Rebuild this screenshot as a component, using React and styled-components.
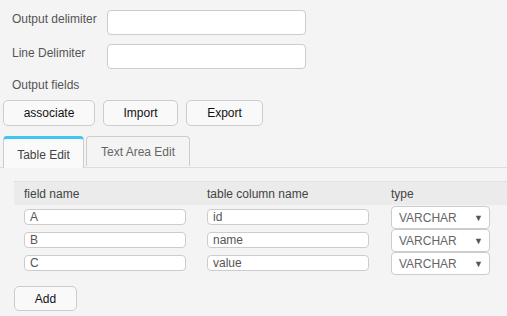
import React from "react";
import styled, { createGlobalStyle } from "styled-components";

const GlobalStyle = createGlobalStyle`
  html, body {
    margin: 0;
    padding: 0;
    background: #f4f4f4;
    font-family: "Liberation Sans", Arial, sans-serif;
    font-size: 12px;
    color: #555;
  }
`;

const Page = styled.div`
  width: 507px;
  height: 316px;
  overflow: hidden;
  padding-top: 10px;
  box-sizing: border-box;
`;

const FieldRow = styled.div`
  display: flex;
  align-items: flex-start;
  margin-bottom: 9px;
`;

const FieldLabel = styled.label`
  width: 95px;
  padding-left: 12px;
  padding-top: 2px;
  line-height: 14px;
  color: #555;
`;

const TextInput = styled.input`
  width: 199px;
  height: 25px;
  box-sizing: border-box;
  border: 1px solid #ccc;
  border-radius: 4px;
  background: #fff;
  outline: none;
`;

const SectionLabel = styled.div`
  padding-left: 12px;
  line-height: 14px;
  height: 22px;
`;

const ButtonBar = styled.div`
  display: flex;
  gap: 8px;
  padding-left: 3px;
`;

const Button = styled.button`
  width: ${(p) => p.width}px;
  height: ${(p) => p.height || 26}px;
  box-sizing: border-box;
  border: 1px solid #ccc;
  border-radius: 5px;
  background: #f9f9f9;
  font-family: inherit;
  font-size: 12px;
  color: #111;
  padding: 0;
`;

const Tabs = styled.div`
  display: flex;
  align-items: flex-start;
  gap: 2px;
  margin-top: 10px;
  padding-left: 3px;
  border-bottom: 1px solid #ddd;
  height: 31px;
`;

const Tab = styled.div`
  width: ${(p) => p.width}px;
  height: ${(p) => (p.active ? 32 : 30)}px;
  box-sizing: border-box;
  display: flex;
  align-items: center;
  justify-content: center;
  border: 1px solid #ccc;
  border-top: ${(p) => (p.active ? "3px solid #3fc4f4" : "1px solid #ccc")};
  border-bottom: none;
  border-radius: 4px 4px 0 0;
  background: ${(p) => (p.active ? "#fafafa" : "#f4f4f4")};
  color: ${(p) => (p.active ? "#444" : "#666")};
  padding-top: ${(p) => (p.active ? 2 : 0)}px;
  font-size: 12px;
`;

const Panel = styled.div`
  padding: 13px 0 0 14px;
`;

const Grid = styled.div`
  display: grid;
  grid-template-columns: 183px 184px 1fr;
`;

const HeadCell = styled.div`
  height: 24px;
  display: flex;
  align-items: center;
  padding-left: 10px;
  background: #ebebeb;
  border-top: 1px solid #e2e2e2;
  box-sizing: border-box;
  color: #444;
`;

const Cell = styled.div`
  height: 23px;
  display: flex;
  align-items: flex-start;
  padding-left: 10px;
  padding-top: 1px;
  box-sizing: border-box;
  &:nth-child(-n + 6) {
    margin-top: 3px;
  }
`;

const SmallInput = styled.input`
  width: ${(p) => p.width}px;
  height: 16px;
  box-sizing: border-box;
  border: 1px solid #ccc;
  border-radius: 4px;
  background: #fff;
  font-family: inherit;
  font-size: 12px;
  color: #555;
  padding: 0 5px;
  outline: none;
`;

const Select = styled.div`
  width: 99px;
  height: 23px;
  box-sizing: border-box;
  border: 1px solid #ccc;
  border-radius: 4px;
  background: #fff;
  display: flex;
  align-items: center;
  justify-content: space-between;
  padding: 0 6px 0 7px;
  color: #666;
  margin-top: -3px;
`;

const Caret = styled.span`
  font-size: 9px;
  color: #555;
`;

const AddRow = styled.div`
  margin-top: 9px;
`;

const rows = [
  ["A", "id"],
  ["B", "name"],
  ["C", "value"],
];

export default function App() {
  return (
    <Page>
      <GlobalStyle />
      <FieldRow>
        <FieldLabel>Output delimiter</FieldLabel>
        <TextInput />
      </FieldRow>
      <FieldRow>
        <FieldLabel>Line Delimiter</FieldLabel>
        <TextInput />
      </FieldRow>
      <SectionLabel>Output fields</SectionLabel>
      <ButtonBar>
        <Button width={92}>associate</Button>
        <Button width={75}>Import</Button>
        <Button width={77}>Export</Button>
      </ButtonBar>
      <Tabs>
        <Tab active width={81}>Table Edit</Tab>
        <Tab width={104}>Text Area Edit</Tab>
      </Tabs>
      <Panel>
        <Grid>
          <HeadCell>field name</HeadCell>
          <HeadCell>table column name</HeadCell>
          <HeadCell>type</HeadCell>
          {rows.map(([field, column]) => (
            <React.Fragment key={field}>
              <Cell>
                <SmallInput width={162} defaultValue={field} />
              </Cell>
              <Cell>
                <SmallInput width={162} defaultValue={column} />
              </Cell>
              <Cell>
                <Select>
                  VARCHAR
                  <Caret>▼</Caret>
                </Select>
              </Cell>
            </React.Fragment>
          ))}
        </Grid>
        <AddRow>
          <Button width={63} height={25}>Add</Button>
        </AddRow>
      </Panel>
    </Page>
  );
}
